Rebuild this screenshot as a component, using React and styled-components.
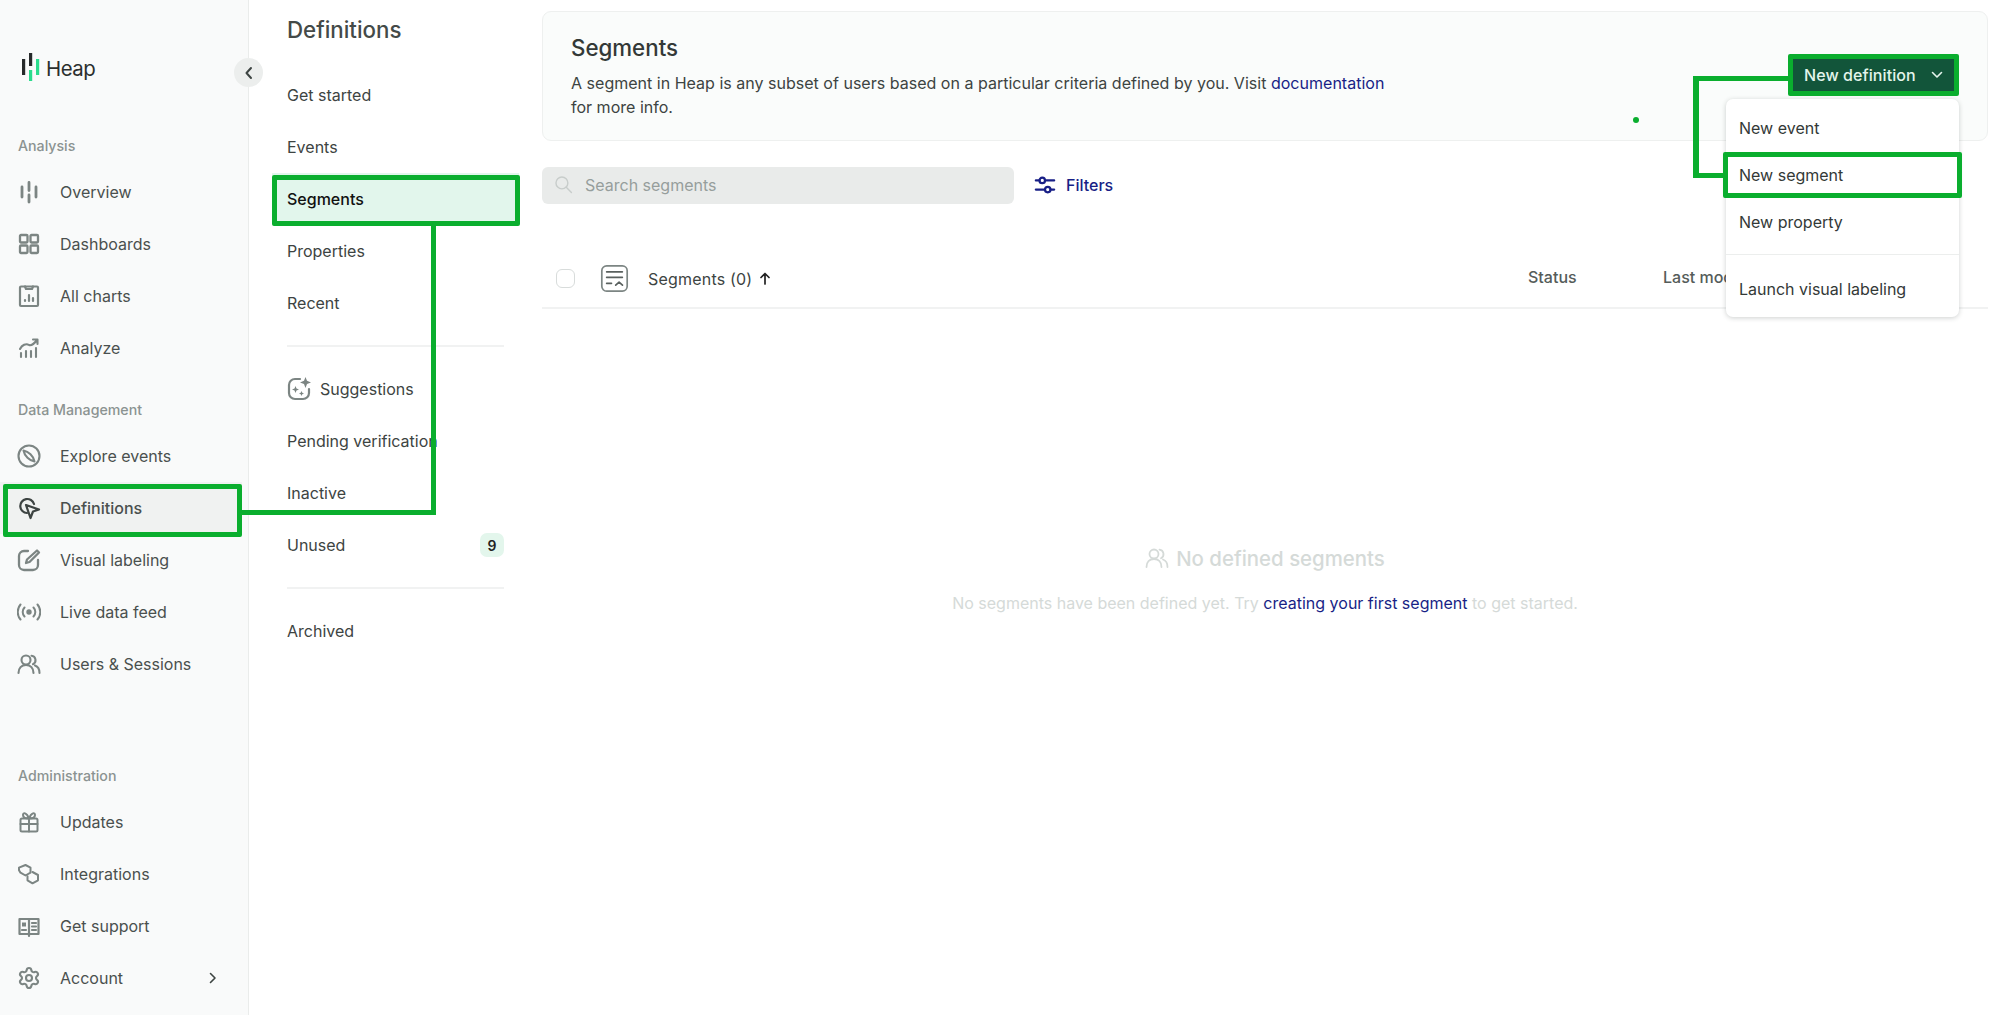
import styled, { createGlobalStyle } from "styled-components";
import { Settings } from "lucide-react";

const GREEN = "#0aae2e";
const NAVY = "#181f86";

const Global = createGlobalStyle`
    html, body {
        margin: 0;
        height: 100%;
        background: #fff;
        overflow: hidden;
    }
    body {
        font-family: Inter, "Liberation Sans", sans-serif;
        color: #3d4442;
    }
`;

const Shell = styled.div`
    position: relative;
    display: flex;
    height: 1015px;
    overflow: hidden;
`;

const Sidebar = styled.aside`
    position: relative;
    flex: none;
    display: flex;
    flex-direction: column;
    box-sizing: border-box;
    width: 249px;
    height: 1015px;
    padding: 0 0 11px;
    background: #f9fafa;
    border-right: 1px solid #eaeceb;
`;

const Logo = styled.div`
    display: flex;
    align-items: center;
    gap: 6px;
    height: 136px;
    padding: 0 0 0 22px;
    box-sizing: border-box;
    font-size: 20.4px;
    letter-spacing: -0.5px;
    color: #2b2f2e;

    & svg { margin-top: -1px; }
`;

const Collapse = styled.button`
    position: absolute;
    top: 58px;
    left: 234px;
    display: flex;
    align-items: center;
    justify-content: center;
    width: 29px;
    height: 29px;
    padding: 0;
    border: 0;
    border-radius: 50%;
    background: #eceeed;
    color: #3d4442;
    z-index: 2;
`;

const SectionLabel = styled.div`
    height: 20px;
    margin: ${p => p.$top || 0}px 0 10px;
    padding-left: 18px;
    font-size: 14.2px;
    line-height: 20px;
    font-weight: 500;
    color: #8b9391;
`;

const NavSection = styled.nav`
    display: flex;
    flex-direction: column;
    margin-top: ${p => p.$auto ? "auto" : "0"};
`;

const NavItem = styled.div`
    display: flex;
    align-items: center;
    gap: 19px;
    height: 52px;
    margin-right: 6px;
    padding: 0 24px 0 17px;
    font-size: 16px;
    color: #4a504e;
    background: ${p => p.$active ? "#f0f2f1" : "transparent"};
    font-weight: ${p => p.$active ? 500 : 400};

    & svg { flex: none; }
    & em { margin-left: auto; font-style: normal; display: flex; }
`;

const SubNav = styled.nav`
    flex: none;
    box-sizing: border-box;
    width: 293px;
    padding: 14px 38px 0 38px;
`;

const SubTitle = styled.h2`
    margin: 0 0 23px;
    font-size: 22.3px;
    line-height: 32px;
    font-weight: 500;
    color: #444a48;
`;

const SubItem = styled.div`
    display: flex;
    align-items: center;
    justify-content: space-between;
    height: 52px;
    margin: 0 -15px;
    padding: 0 15px;
    font-size: 16px;
    white-space: nowrap;
    color: ${p => p.$active ? "#111" : "#3d4442"};
    font-weight: ${p => p.$active ? 500 : 400};
    background: ${p => p.$active ? "#e2f6ec" : "transparent"};
`;

const SubLabel = styled.span`
    display: flex;
    align-items: center;
    gap: 9px;
`;

const Badge = styled.span`
    display: flex;
    align-items: center;
    justify-content: center;
    width: 24px;
    height: 24px;
    border-radius: 7px;
    background: #e3f6ec;
    font-size: 14px;
    font-weight: 600;
    color: #222;
`;

const Rule = styled.hr`
    height: 2px;
    margin: 16px 0;
    border: 0;
    background: #f1f2f2;
`;

const Main = styled.main`
    flex: 1;
    min-width: 0;
    padding: 11px 11px 0 0;
    display: flex;
    flex-direction: column;
`;

const Banner = styled.section`
    position: relative;
    display: flex;
    justify-content: space-between;
    box-sizing: border-box;
    height: 130px;
    padding: 20px 5px 0 28px;
    background: #fafcfb;
    border: 1px solid #eef0ef;
    border-radius: 9px;
`;

const BannerTitle = styled.h1`
    margin: 0 0 7px;
    font-size: 22.3px;
    line-height: 32px;
    font-weight: 500;
    color: #333937;
`;

const BannerText = styled.p`
    width: 830px;
    margin: 0;
    font-size: 16.05px;
    line-height: 24px;
    color: #3d4442;
`;

const Link = styled.a`
    color: ${NAVY};
    text-decoration: none;
`;

const NewButton = styled.button`
    display: flex;
    align-items: center;
    justify-content: space-between;
    box-sizing: border-box;
    width: 161px;
    height: 32px;
    margin: 27px 28px 0 0;
    padding: 0 11px 0 11px;
    border: 0;
    background: #12553a;
    color: #e4f5ec;
    font-family: inherit;
    font-size: 16px;
    letter-spacing: 0.08px;
    font-weight: 500;
`;

const Menu = styled.div`
    position: absolute;
    top: 87px;
    right: 28px;
    z-index: 3;
    box-sizing: border-box;
    width: 233px;
    height: 218px;
    padding-top: 5px;
    background: #fff;
    border-radius: 7px;
    box-shadow: 0 1px 5px rgba(30, 40, 35, 0.22);
`;

const MenuItem = styled.div`
    display: flex;
    align-items: center;
    height: 47px;
    padding-left: 13px;
    font-size: 16px;
    color: #333937;
`;

const MenuRule = styled.hr`
    height: 1px;
    margin: 9px 0 10px;
    border: 0;
    background: #eceeed;
`;

const Toolbar = styled.div`
    display: flex;
    align-items: center;
    gap: 20px;
    margin-top: 26px;
`;

const Search = styled.div`
    display: flex;
    align-items: center;
    gap: 12px;
    box-sizing: border-box;
    width: 472px;
    height: 37px;
    padding: 0 0 2px 12px;
    border-radius: 6px;
    background: #e9ebea;
    font-size: 16px;
    color: #969e9c;
`;

const Filters = styled.div`
    display: flex;
    align-items: center;
    gap: 10px;
    padding-bottom: 2px;
    font-size: 16px;
    font-weight: 500;
    color: ${NAVY};
`;

const TableHead = styled.div`
    display: flex;
    align-items: center;
    box-sizing: border-box;
    height: 59px;
    margin-top: 46px;
    padding-left: 14px;
    border-bottom: 2px solid #f1f2f2;
    font-size: 16px;
    color: #3d4442;
`;

const Check = styled.span`
    flex: none;
    box-sizing: border-box;
    width: 19px;
    height: 19px;
    margin-right: 25px;
    border: 1px solid #d8dcdb;
    border-radius: 6px;
`;

const HeadName = styled.div`
    flex: 1;
    display: flex;
    align-items: center;
    gap: 7px;
    margin-left: 19px;
    letter-spacing: 0.2px;
`;

const HeadCell = styled.div`
    flex: none;
    width: ${p => p.$width}px;
    margin-top: -4px;
    font-weight: 500;
    color: #555c5a;
    white-space: nowrap;
`;

const Empty = styled.div`
    display: flex;
    flex-direction: column;
    align-items: center;
    padding-top: 233px;
`;

const EmptyTitle = styled.div`
    display: flex;
    align-items: center;
    gap: 7px;
    height: 32px;
    font-size: 20.4px;
    font-weight: 500;
    color: #d5dad8;
`;

const EmptyText = styled.div`
    margin-top: 17px;
    font-size: 16px;
    line-height: 24px;
    color: #d5dad8;
`;

/* green tutorial annotations drawn on top of the screenshot */
const Callout = styled.div`
    position: absolute;
    z-index: 5;
    box-sizing: border-box;
    top: ${p => p.$y}px;
    left: ${p => p.$x}px;
    width: ${p => p.$w}px;
    height: ${p => p.$h}px;
    border: 5px solid ${GREEN};
    border-radius: 2px;
`;

const Wire = styled.div`
    position: absolute;
    z-index: 5;
    top: ${p => p.$y}px;
    left: ${p => p.$x}px;
    width: ${p => p.$w}px;
    height: ${p => p.$h}px;
    background: ${GREEN};
`;

const Dot = styled.i`
    position: absolute;
    top: 117px;
    left: 1633px;
    width: 6px;
    height: 6px;
    border-radius: 50%;
    background: ${GREEN};
    z-index: 5;
`;

const Ico = ({ children, size = 24, color = "#7c8583", sw = 1.8 }) => (
    <svg width={size} height={size} viewBox="0 0 24 24" fill="none" stroke={color} strokeWidth={sw} strokeLinecap="round" strokeLinejoin="round">
        {children}
    </svg>
);

const icons = {
    overview: <Ico sw={2.8}><path d="M5 7v10M12 2.500v8M12 15v7M19 7v10" /></Ico>,
    dashboards: <Ico sw={2.3}><rect x="3" y="3" width="7.500" height="7.500" rx="1" /><rect x="13.500" y="3" width="7.500" height="7.500" rx="1" /><rect x="3" y="13.500" width="7.500" height="7.500" rx="1" /><rect x="13.500" y="13.500" width="7.500" height="7.500" rx="1" /></Ico>,
    charts: <Ico sw={2.2}><rect x="3" y="2.500" width="18" height="19.500" rx="1" /><path d="M8 2.500l1 2.500h6l1-2.500M8 17v-1M12 17v-6M16 17v-3" /></Ico>,
    analyze: <Ico sw={2.1}><path d="M4 21v-4M9 21v-6M14 21v-6M19 21v-9M3 13c2-4 6-6 9-4 3 1 5-1 8-5M16 3.500h4.500V8" /></Ico>,
    explore: <Ico sw={2.1}><circle cx="12" cy="12" r="10.500" /><path d="M6.500 6.500c5 1 10 5.500 11 11-5-1-10-5.500-11-11z" fill="#f9fafa" sw="1.600" /></Ico>,
    definitions: <Ico color="#3d4442" sw={2.2}><path d="M10 17a7 7 0 1 1 7-9" /><path d="M9 9l13 4.500-6 2-2.500 6.500z" fill="#f0f2f1" /></Ico>,
    visual: <Ico sw={2.3}><path d="M11 3H7a5 5 0 0 0-5 5v9a5 5 0 0 0 5 5h9a5 5 0 0 0 5-5v-5" /><path d="M20 2.500l2 2-9.500 9.500-3.500 1 1-3.500z" /></Ico>,
    live: <Ico sw={2}><circle cx="12" cy="12" r="1.700" fill="#7c8583" /><path d="M7.500 7.500a6.500 6.500 0 0 0 0 9M16.500 7.500a6.500 6.500 0 0 1 0 9M3.500 4.500a11.500 11.500 0 0 0 0 15M20.500 4.500a11.500 11.500 0 0 1 0 15" /></Ico>,
    users: <Ico sw={2.1}><circle cx="9" cy="8" r="4.500" /><path d="M1.500 21c0-5 3-8 7.500-8s7.500 3 7.500 8" /><path d="M14.500 3.700a4.500 4.500 0 0 1 1.500 8.500M18 13.500c3 1 4.500 4 4.500 7.500" /></Ico>,
    updates: <Ico sw={2}><rect x="3.500" y="8.500" width="17" height="13" rx="1.500" /><path d="M3.500 14h17M12 8.500v13M12 8.500C9 8.500 6 7.500 6 5s3.500-3 6 3.500c2.500-6.500 6-6 6-3.500s-3 3.500-6 3.500z" /></Ico>,
    integrations: <Ico sw={2}><path d="M8.500 3l5 2.700v5l-5 2.800-5-2.800-1.500-2.500V5.700z" /><path d="M15.500 10l5.500 3v5.300l-5.500 3-5-3v-4" /></Ico>,
    support: <Ico sw={2.2}><path d="M12 5H2.500v15H12m0-15h9.500v15H12m0-15v17" /><rect x="5" y="8.500" width="4" height="4" fill="#7c8583" stroke="none" /><path d="M15 9h4M15 12.500h4M15 16h4M5 16h4" /></Ico>,
    account: <Settings size={24} color="#7c8583" strokeWidth={2.100} />,
};

const navGroups = [
    { label: "Analysis", items: [["Overview", "overview"], ["Dashboards", "dashboards"], ["All charts", "charts"], ["Analyze", "analyze"]] },
    { label: "Data Management", top: 26, items: [["Explore events", "explore"], ["Definitions", "definitions", true], ["Visual labeling", "visual"], ["Live data feed", "live"], ["Users & Sessions", "users"]] },
    { label: "Administration", auto: true, items: [["Updates", "updates"], ["Integrations", "integrations"], ["Get support", "support"], ["Account", "account", false, true]] },
];

function LogoMark() {
    return (
        <svg width="18" height="29" viewBox="0 0 18 29">
            <rect x="0" y="6" width="3.200" height="16" fill="#26292a" />
            <rect x="7" y="0" width="3.200" height="13" fill="#26292a" />
            <rect x="7" y="17" width="3.200" height="11" fill="#2bdc8d" />
            <rect x="14" y="6" width="3.200" height="16" fill="#2bdc8d" />
        </svg>
    );
}

function SideNav() {
    return (
        <Sidebar>
            <Logo><LogoMark /><span>Heap</span></Logo>
            <Collapse>
                <svg width="14" height="14" viewBox="0 0 14 14" fill="none" stroke="currentColor" strokeWidth="2" strokeLinecap="round" strokeLinejoin="round"><path d="M9 2L4.500 7 9 12" /></svg>
            </Collapse>
            {navGroups.map(group => (
                <NavSection key={group.label} $auto={group.auto}>
                    <SectionLabel $top={group.top}>{group.label}</SectionLabel>
                    {group.items.map(([text, icon, active, more]) => (
                        <NavItem key={text} $active={active}>
                            {icons[icon]}
                            <span>{text}</span>
                            {more && <em><svg width="10" height="12" viewBox="0 0 10 12" fill="none" stroke="#3d4442" strokeWidth="1.600" strokeLinecap="round" strokeLinejoin="round"><path d="M2.500 1.500L7 6l-4.500 4.500" /></svg></em>}
                        </NavItem>
                    ))}
                </NavSection>
            ))}
        </Sidebar>
    );
}

function DefinitionsNav() {
    return (
        <SubNav>
            <SubTitle>Definitions</SubTitle>
            <SubItem>Get started</SubItem>
            <SubItem>Events</SubItem>
            <SubItem $active>Segments</SubItem>
            <SubItem>Properties</SubItem>
            <SubItem>Recent</SubItem>
            <Rule />
            <SubItem>
                <SubLabel>
                    <Ico sw={2.200}>
                        <path d="M13 2H8a6 6 0 0 0-6 6v8a6 6 0 0 0 6 6h8a6 6 0 0 0 6-6v-4" />
                        <path d="M18.500 0l1.500 3.800L24 5.500l-4 1.500L18.500 11 17 7l-4-1.500 4-1.700z" fill="#7c8583" stroke="none" />
                        <path d="M8.500 9l1 2.500 2.500 1-2.500 1-1 2.500-1-2.500-2.500-1 2.500-1zM14.500 14l.8 1.700 1.700.8-1.700.8-.8 1.700-.8-1.700-1.700-.8 1.700-.8z" fill="#7c8583" stroke="none" />
                    </Ico>
                    Suggestions
                </SubLabel>
            </SubItem>
            <SubItem>Pending verification</SubItem>
            <SubItem>Inactive</SubItem>
            <SubItem>Unused<Badge>9</Badge></SubItem>
            <Rule />
            <SubItem>Archived</SubItem>
        </SubNav>
    );
}

function SegmentsPanel() {
    return (
        <Main>
            <Banner>
                <div>
                    <BannerTitle>Segments</BannerTitle>
                    <BannerText>
                        A segment in Heap is any subset of users based on a particular criteria defined by you. Visit <Link>documentation</Link> for more info.
                    </BannerText>
                </div>
                <NewButton>
                    New definition
                    <svg width="12" height="8" viewBox="0 0 12 8" fill="none" stroke="#e4f5ec" strokeWidth="1.600" strokeLinecap="round" strokeLinejoin="round"><path d="M1.500 1.500L6 6l4.500-4.500" /></svg>
                </NewButton>
                <Menu>
                    <MenuItem>New event</MenuItem>
                    <MenuItem>New segment</MenuItem>
                    <MenuItem>New property</MenuItem>
                    <MenuRule />
                    <MenuItem>Launch visual labeling</MenuItem>
                </Menu>
            </Banner>

            <Toolbar>
                <Search>
                    <Ico size={19} color="#c8cdcb" sw={1.800}><circle cx="10" cy="10" r="7.500" /><path d="M15.500 15.500L22 22" /></Ico>
                    Search segments
                </Search>
                <Filters>
                    <Ico size={22} color={NAVY} sw={2.400}><path d="M2 7h4M12 7h10M2 17h10M18 17h4" /><circle cx="9" cy="7" r="3" /><circle cx="15" cy="17" r="3" /></Ico>
                    Filters
                </Filters>
            </Toolbar>

            <TableHead>
                <Check />
                <Ico size={29} color="#7c8583" sw={1.400}>
                    <rect x="1.500" y="1.500" width="21" height="21" rx="4" />
                    <path d="M5.500 6.500h13M5.500 11h13M5.500 16h4" stroke="#59605e" />
                    <path d="M13 17.500l2.800-2.500 2.800 2.500" stroke="#59605e" />
                </Ico>
                <HeadName>
                    Segments (0)
                    <svg width="12" height="13" viewBox="0 0 12 13" fill="none" stroke="#222" strokeWidth="1.700" strokeLinecap="round" strokeLinejoin="round"><path d="M6 12V1.500M2 5.500l4-4 4 4" /></svg>
                </HeadName>
                <HeadCell $width={135}>Status</HeadCell>
                <HeadCell $width={325}>Last modified</HeadCell>
            </TableHead>

            <Empty>
                <EmptyTitle>
                    <Ico color="#d5dad8" sw={1.800}><circle cx="9" cy="8" r="4.500" /><path d="M1.500 21c0-5 3-8 7.500-8s7.500 3 7.500 8" /><path d="M14.500 3.700a4.500 4.500 0 0 1 1.500 8.500M18 13.500c3 1 4.500 4 4.500 7.500" /></Ico>
                    No defined segments
                </EmptyTitle>
                <EmptyText>
                    No segments have been defined yet. Try <Link>creating your first segment</Link> to get started.
                </EmptyText>
            </Empty>
        </Main>
    );
}

export default function App() {
    return (
        <Shell>
            <Global />
            <SideNav />
            <DefinitionsNav />
            <SegmentsPanel />

            <Callout $x={3} $y={484} $w={239} $h={53} />
            <Wire $x={242} $y={510} $w={194} $h={5} />
            <Wire $x={431} $y={226} $w={5} $h={289} />
            <Callout $x={272} $y={175} $w={248} $h={51} />

            <Callout $x={1788} $y={54} $w={171} $h={42} />
            <Wire $x={1693} $y={76} $w={95} $h={5} />
            <Wire $x={1693} $y={76} $w={6} $h={102} />
            <Wire $x={1693} $y={173} $w={30} $h={5} />
            <Callout $x={1723} $y={152} $w={239} $h={46} />
            <Dot />
        </Shell>
    );
}
